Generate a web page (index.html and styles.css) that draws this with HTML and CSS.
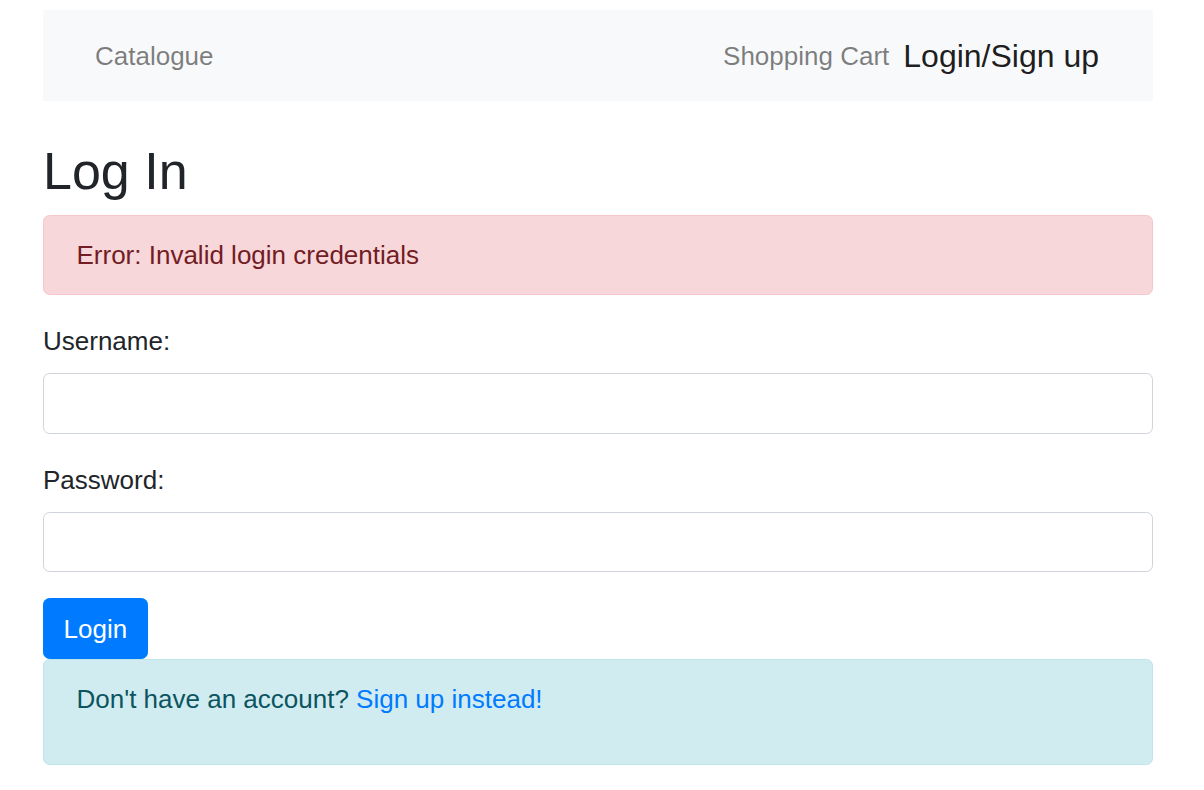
FILE: index.html
```html
<!DOCTYPE html>
<html lang="en">
<head>
<meta charset="utf-8">
<title>Log In</title>
<link rel="stylesheet" href="styles.css">
</head>
<body>
<div class="container">
  <nav class="navbar">
    <a class="nav-link catalogue" href="#">Catalogue</a>
    <div class="nav-right">
      <a class="nav-link cart" href="#">Shopping Cart</a>
      <a class="brand" href="#">Login/Sign up</a>
    </div>
  </nav>
  <h2 class="title">Log In</h2>
  <div class="alert alert-danger">Error: Invalid login credentials</div>
  <form class="form">
    <div class="form-group">
      <label class="label" for="username">Username:</label>
      <input class="input" type="text" id="username">
    </div>
    <div class="form-group">
      <label class="label" for="password">Password:</label>
      <input class="input" type="password" id="password">
    </div>
    <div class="actions">
      <button class="btn" type="button">Login</button>
    </div>
  </form>
  <div class="alert alert-info">
    <p class="alert-text">Don't have an account? <a class="link" href="#">Sign up instead!</a></p>
  </div>
</div>
</body>
</html>
```
FILE: styles.css
```css
* { box-sizing: border-box; }
html, body { margin: 0; padding: 0; }
body {
  font-family: "Liberation Sans", Arial, sans-serif;
  font-size: 26px;
  line-height: 1.5;
  color: #212529;
  background: #fff;
}
.container {
  width: 1110px;
  margin-left: 43px;
}
.navbar {
  margin-top: 10px;
  height: 91px;
  padding: 14px 26px 12px;
  background: #f8f9fa;
  display: flex;
  align-items: center;
  justify-content: space-between;
}
.nav-link {
  text-decoration: none;
  color: rgba(0,0,0,.5);
  padding: 13px 0;
  font-size: 26px;
  line-height: 39px;
}
.catalogue { padding-left: 26px; }
.nav-right { display: flex; align-items: center; }
.cart { margin-right: 14px; }
.brand {
  font-size: 32px;
  line-height: 48px;
  padding-top: 5px;
  padding-bottom: 6px;
  color: rgba(0,0,0,.9);
  text-decoration: none;
  margin-right: 28px;
}
.title {
  margin: 39px 0 13px;
  font-size: 52px;
  line-height: 1.2;
  font-weight: 500;
}
.alert {
  padding: 19.5px 32.5px;
  border: 1px solid transparent;
  border-radius: 6.5px;
  margin-bottom: 26px;
}
.alert-danger { background: #f8d7da; border-color: #f5c6cb; color: #721c24; }
.alert-info { background: #d1ecf1; border-color: #bee5eb; color: #0c5460; }
.alert-text { margin: 0 0 25px; padding-top: 1px; }
.link { color: #007bff; text-decoration: none; }
.form { margin: 0; }
.form-group { margin-bottom: 26px; }
.label { display: inline-block; margin-bottom: 12px; padding-top: 1px; }
.input {
  display: block;
  width: 100%;
  height: 60.5px;
  padding: 9.75px 19.5px;
  font: inherit;
  color: #495057;
  background: #fff;
  border: 1px solid #ced4da;
  border-radius: 6.5px;
}
.actions { display: flex; }
.btn {
  font: inherit;
  line-height: 1.5;
  color: #fff;
  background: #007bff;
  border: 1px solid #007bff;
  border-radius: 6.5px;
  padding: 10.25px 19.5px 9.25px;
  cursor: pointer;
}
```
